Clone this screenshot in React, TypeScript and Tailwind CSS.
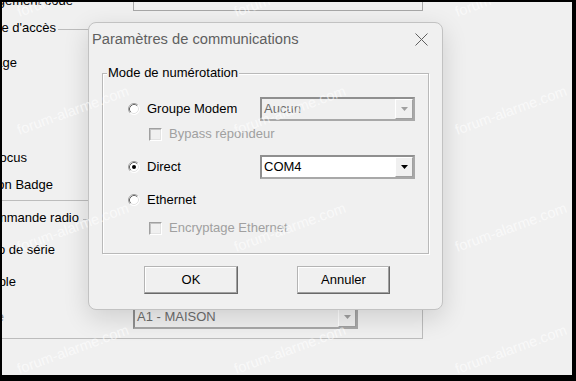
import React from 'react';

// petit bouton radio façon Windows classique
const Radio = ({ checked }: { checked?: boolean }) => (
    <svg width="12" height="12" viewBox="0 0 12 12" className="shrink-0">
        <circle cx="6" cy="6" r="5.5" fill="#fff" />
        <path d="M2.11 9.89 A5.5 5.5 0 0 1 9.89 2.11" fill="none" stroke="#a0a0a0" />
        <path d="M9.89 2.11 A5.5 5.5 0 0 1 2.11 9.89" fill="none" stroke="#ffffff" />
        <path d="M2.82 9.18 A4.5 4.5 0 0 1 9.18 2.82" fill="none" stroke="#696969" />
        <path d="M9.18 2.82 A4.5 4.5 0 0 1 2.82 9.18" fill="none" stroke="#e3e3e3" />
        {checked && <circle cx="6" cy="6" r="2" fill="#000" />}
    </svg>
);

const CheckboxDisabled = () => (
    <div className="w-[13px] h-[13px] shrink-0 border border-t-[#a0a0a0] border-l-[#a0a0a0] border-r-white border-b-white bg-[#f0f0f0] shadow-[inset_1px_1px_0_#c4c4c4,inset_-1px_-1px_0_#e3e3e3]" />
);

const Arrow = ({ color }: { color: string }) => (
    <svg width="7" height="4" viewBox="0 0 7 4">
        <path d="M0 0 H7 L3.5 4 Z" fill={color} />
    </svg>
);

interface SelectProps {
    value: string;
    disabled?: boolean;
    className?: string;
}

const Select = ({ value, disabled, className = "" }: SelectProps) => (
    <div className={`flex h-[24px] border-2 border-[#a8a8a8] border-t-[#8f8f8f] border-l-[#8f8f8f] ${disabled ? 'bg-[#f0f0f0]' : 'bg-white'} ${className}`}>
        <div className={`flex-1 flex items-center pl-[2px] ${disabled ? 'text-[#6d6d6d]' : 'text-black'}`}>{value}</div>
        <div className="w-[18px] flex items-center justify-center border border-t-white border-l-white border-r-[#a0a0a0] border-b-[#a0a0a0] bg-[#f0f0f0]">
            <Arrow color={disabled ? '#a0a0a0' : '#000'} />
        </div>
    </div>
);

const Button = ({ label, className = "" }: { label: string; className?: string }) => (
    <button className={`h-[28px] flex items-center justify-center bg-[#f0f0f0] border border-t-[#b4b4b4] border-l-[#b4b4b4] border-r-[#696969] border-b-[#696969] shadow-[inset_-1px_-1px_0_#a0a0a0,inset_1px_1px_0_#fff] text-black ${className}`}>
        {label}
    </button>
);

// texte coupé par le bord gauche de la capture
const Clipped = ({ text, w, className = "" }: { text: string; w: string; className?: string }) => (
    <div className={`${w} shrink-0 overflow-hidden flex justify-end whitespace-nowrap ${className}`}>{text}</div>
);

const marks = [
    "left-[18px] top-[3px]", "left-[235px] top-[3px]", "left-[456px] top-[3px]",
    "left-[18px] top-[121px]", "left-[235px] top-[121px]", "left-[456px] top-[121px]",
    "left-[18px] top-[238px]", "left-[235px] top-[238px]", "left-[456px] top-[238px]",
    "left-[18px] top-[360px]", "left-[235px] top-[360px]", "left-[456px] top-[360px]",
];

export default function App() {
    return (
        <div className="w-[576px] h-[381px] bg-black pt-[2px] pl-[2px] pr-[4px] pb-[6px] overflow-hidden font-['Liberation_Sans',Arial,sans-serif]">
            <div className="relative w-full h-full bg-[#f0f0f0] overflow-hidden text-[13px] leading-[16px] text-black">

                {/* fenêtre derrière */}
                <div className="flex h-[9px]">
                    <div className="w-[71px] shrink-0 overflow-hidden flex justify-end whitespace-nowrap items-start">
                        <span className="mt-[-9px] leading-[15px]">Changement code</span>
                    </div>
                    <div className="ml-[60px] w-[290px] h-full border-x border-b border-[#a8a8a8]" />
                </div>

                <div className="mt-[9px] w-[421px] border-b border-[#bcbcbc] pb-[7px]">
                    <div className="h-[16px] flex items-center">
                        <Clipped text="Contrôle d'accès" w="w-[54px]" />
                        <div className="ml-[2px] flex-1 h-px mt-[2px] bg-[#bcbcbc]" />
                    </div>
                    <div className="mt-[19px] h-[16px] flex items-center">
                        <Clipped text="Message" w="w-[15px]" />
                    </div>
                    <div className="mt-[79px] h-[16px] flex items-center">
                        <Clipped text="Focus" w="w-[25px]" />
                    </div>
                    <div className="mt-[11px] h-[16px] flex items-center">
                        <Clipped text="Activation Badge" w="w-[51px]" />
                    </div>
                </div>

                <div className="mt-[9px] w-[421px] border-r border-b border-[#bcbcbc] pb-[10px]">
                    <div className="h-[16px] flex items-center">
                        <Clipped text="Télécommande radio" w="w-[77px]" />
                        <div className="ml-[4px] flex-1 h-px mt-[2px] bg-[#bcbcbc]" />
                    </div>
                    <div className="mt-[16px] h-[16px] flex items-center">
                        <Clipped text="Numéro de série" w="w-[53px]" />
                    </div>
                    <div className="mt-[16px] h-[16px] flex items-center">
                        <Clipped text="Simple" w="w-[14px]" />
                    </div>
                    <div className="mt-[16px] h-[22px] flex items-center">
                        <Clipped text="Zone" w="w-[2px]" className="text-[#8a8a8a]" />
                        <Select value="A1 - MAISON" disabled className="ml-[129px] w-[225px] h-[22px]" />
                    </div>
                </div>

                {/* boîte de dialogue */}
                <div className="absolute left-[86px] top-[20px] w-[355px] h-[288px] rounded-[8px] border border-[#c2c2c2] bg-[#f0f0f0] shadow-[0_8px_26px_rgba(0,0,0,0.14)] flex flex-col">
                    <div className="h-[32px] flex items-center justify-between pl-[3px] pr-[14px]">
                        <span className="text-[14.7px] text-[#5f5f5f]">Paramètres de communications</span>
                        <svg width="13" height="13" viewBox="0 0 13 13">
                            <path d="M0.5 0.5 L12.5 12.5 M12.5 0.5 L0.5 12.5" stroke="#5f5f5f" strokeWidth="1" fill="none" />
                        </svg>
                    </div>

                    <div className="relative mx-[13px] mt-[18px] border border-[#b9b9b9] shadow-[inset_1px_1px_0_#fff,1px_1px_0_#fff] pt-[23px] pb-[17px] pl-[25px]">
                        <span className="absolute left-[4px] top-[-9px] px-[1px] bg-[#f0f0f0]">Mode de numérotation</span>

                        <div className="h-[24px] flex items-center">
                            <div className="w-[132px] flex items-center">
                                <Radio />
                                <span className="ml-[7px]">Groupe Modem</span>
                            </div>
                            <Select value="Aucun" disabled className="w-[155px]" />
                        </div>

                        <div className="mt-[5px] h-[16px] flex items-center ml-[21px]">
                            <CheckboxDisabled />
                            <span className="ml-[7px] text-[#a0a0a0]">Bypass répondeur</span>
                        </div>

                        <div className="mt-[13px] h-[24px] flex items-center">
                            <div className="w-[132px] flex items-center">
                                <Radio checked />
                                <span className="ml-[7px]">Direct</span>
                            </div>
                            <Select value="COM4" className="w-[155px]" />
                        </div>

                        <div className="mt-[13px] h-[16px] flex items-center">
                            <Radio />
                            <span className="ml-[7px]">Ethernet</span>
                        </div>

                        <div className="mt-[12px] h-[16px] flex items-center ml-[21px]">
                            <CheckboxDisabled />
                            <span className="ml-[7px] text-[#a0a0a0]">Encryptage Ethernet</span>
                        </div>
                    </div>

                    <div className="mt-[12px] flex pl-[55px]">
                        <Button label="OK" className="w-[94px]" />
                        <Button label="Annuler" className="ml-[59px] w-[93px]" />
                    </div>
                </div>

                {/* filigrane */}
                {marks.map((pos, i) => (
                    <span
                        key={i}
                        className={`absolute ${pos} text-[14.5px] leading-[14px] whitespace-nowrap text-white/60 origin-bottom-left rotate-[-20deg] pointer-events-none`}
                    >
                        forum-alarme.com
                    </span>
                ))}
            </div>
        </div>
    );
}
